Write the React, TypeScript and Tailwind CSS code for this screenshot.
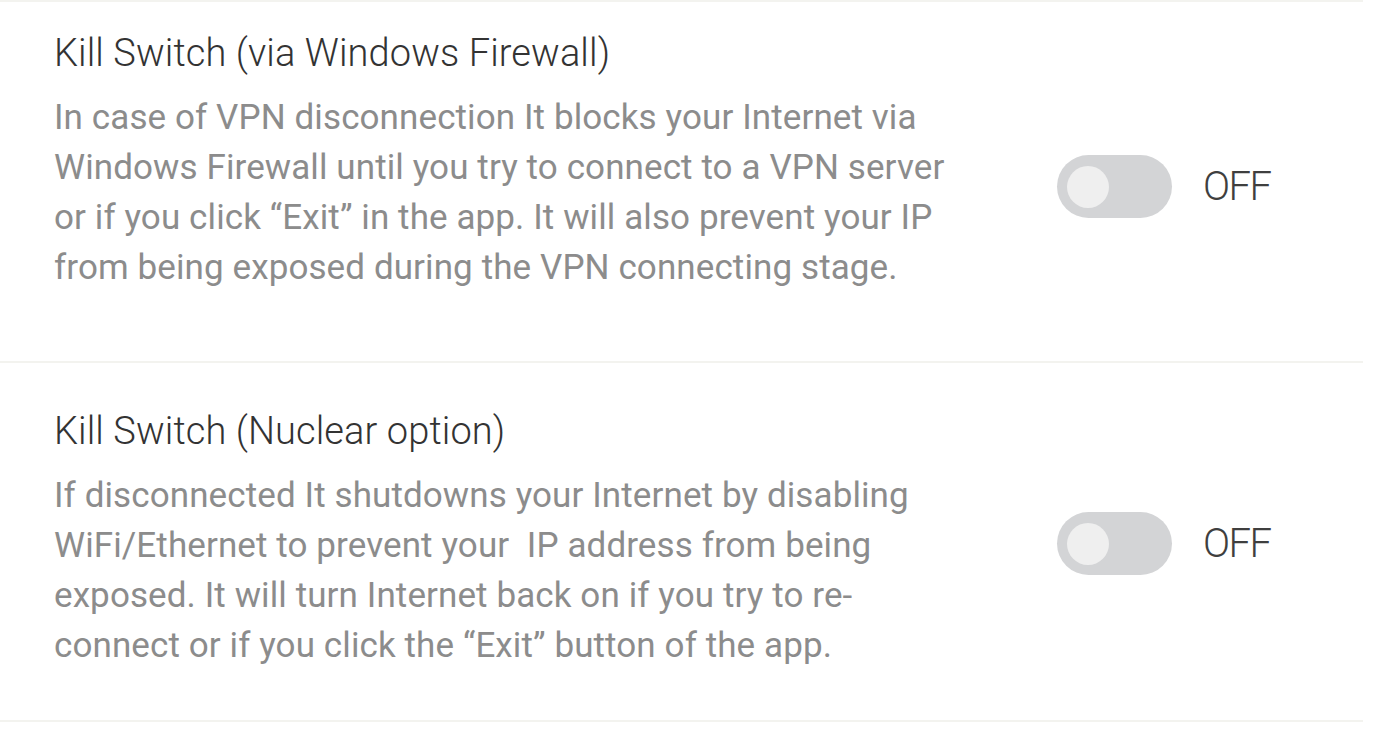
import React from "react";

function Toggle() {
  return (
    <div className="flex items-center">
      <div className="w-[115px] h-[63px] rounded-full bg-[#d3d4d6] flex items-center pl-[10px]">
        <div className="w-[42px] h-[42px] rounded-full bg-[#efefef]" />
      </div>
      <span className="ml-[31px] text-[40px] leading-none text-[#3f3f3f] font-light tracking-[-1.5px]">OFF</span>
    </div>
  );
}

type RowProps = {
  title: string;
  lines: string[];
  pt: string;
  pb: string;
  togglePt: string;
};

function Row({ title, lines, pt, pb, togglePt }: RowProps) {
  return (
    <div className="border-b-2 border-[#f3f3ef] mr-[11px]">
      <div className={`flex ${pt} ${pb}`}>
        <div className="pl-[54px] w-[1057px]">
          <div className="text-[38px] leading-[50px] text-[#333333] font-light tracking-[0.1px]">{title}</div>
          <div className="text-[35px] leading-[50px] text-[#8c8c8c] font-normal tracking-[0.1px] mt-[15px]">
            {lines.map((l, i) => (
              <div key={i} className="whitespace-pre">{l}</div>
            ))}
          </div>
        </div>
        <div className={togglePt}>
          <Toggle />
        </div>
      </div>
    </div>
  );
}

export default function App() {
  return (
    <div className="w-[1374px] h-[732px] bg-white overflow-hidden" style={{ fontFamily: "Roboto, 'Noto Sans', sans-serif" }}>
      <div className="border-t-2 border-[#f3f3ef] mr-[11px]" />
      <Row
        title="Kill Switch (via Windows Firewall)"
        lines={[
          "In case of VPN disconnection It blocks your Internet via",
          "Windows Firewall until you try to connect to a VPN server",
          "or if you click \u201cExit\u201d in the app. It will also prevent your IP",
          "from being exposed during the VPN connecting stage.",
        ]}
        pt="pt-[26px]"
        pb="pb-[68px]"
        togglePt="pt-[127px]"
      />
      <Row
        title="Kill Switch (Nuclear option)"
        lines={[
          "If disconnected It shutdowns your Internet by disabling",
          "WiFi/Ethernet to prevent your  IP address from being",
          "exposed. It will turn Internet back on if you try to re-",
          "connect or if you click the \u201cExit\u201d button of the app.",
        ]}
        pt="pt-[43px]"
        pb="pb-[49px]"
        togglePt="pt-[106px]"
      />
    </div>
  );
}
